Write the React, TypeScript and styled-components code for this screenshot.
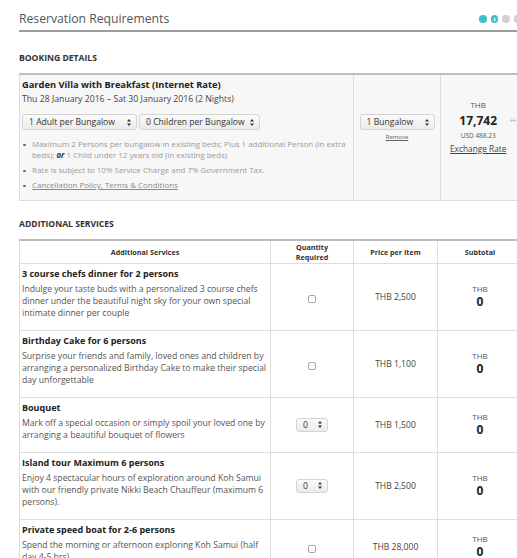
import React from 'react';
import styled, { createGlobalStyle } from 'styled-components';

const GlobalStyle = createGlobalStyle`
  html, body { margin: 0; padding: 0; overflow: hidden; background: #fff; }
  body { font-family: "Open Sans", "DejaVu Sans", sans-serif; color: #555; }
  * { box-sizing: border-box; }
`;

const Page = styled.div`
  width: 522px;
  padding-left: 19px;
`;

const Header = styled.div`
  display: flex;
  align-items: center;
  justify-content: space-between;
  height: 32px;
  padding-top: 8px;
  border-bottom: 2px solid #9c9c9c;
`;

const Title = styled.h1`
  margin: 0;
  font-size: 12.2px;
  font-weight: 400;
  line-height: 22px;
  color: #555;
`;

const Steps = styled.div`
  display: flex;
  align-items: center;
  gap: 4px;
  margin-right: 1px;
`;

const Dot = styled.span<{ $active?: boolean }>`
  display: inline-flex;
  align-items: center;
  justify-content: center;
  width: 7.5px;
  height: 7.5px;
  border-radius: 50%;
  background: ${(p) => (p.$active ? '#3cbfc8' : '#d2d2d2')};
`;

const SectionLabel = styled.h2<{ $top: number }>`
  margin: ${(p) => p.$top}px 0 10px;
  font-size: 8.6px;
  font-weight: 700;
  line-height: 10px;
  color: #333;
  text-transform: uppercase;
`;

const BookingBox = styled.div`
  display: grid;
  grid-template-columns: 334px 87px 82px;
  border-top: 2px solid #bdbdbd;
  border-left: 1px solid #dcdcdc;
  border-bottom: 1px solid #dcdcdc;
  background: #f7f7f7;
  height: 128px;
`;

const BookingMain = styled.div`
  padding: 3px 6px 0 2px;
  border-right: 1px solid #dcdcdc;
`;

const RoomName = styled.div`
  font-size: 9.3px;
  font-weight: 700;
  line-height: 13px;
  color: #222;
`;

const Dates = styled.div`
  margin-top: 2px;
  font-size: 8.7px;
  line-height: 13px;
  color: #444;
`;

const SelectRow = styled.div`
  display: flex;
  gap: 2px;
  margin-top: 8px;
`;

const Select = styled.div<{ $w: number; $h?: number }>`
  display: flex;
  align-items: center;
  justify-content: space-between;
  width: ${(p) => p.$w}px;
  height: ${(p) => p.$h ?? 16}px;
  padding: 0 5px 0 6px;
  border: 1px solid #d4d4d4;
  border-radius: 3px;
  background: linear-gradient(#fbfbfb, #ebebeb);
  font-size: 8.6px;
  color: #333;
  white-space: nowrap;
`;

const Notes = styled.ul`
  list-style: none;
  margin: 9px 0 0;
  padding: 0;
`;

const Note = styled.li`
  position: relative;
  padding-left: 10px;
  margin-bottom: 4px;
  font-size: 7.95px;
  line-height: 11px;
  color: #9a9a9a;
  &::before {
    content: '';
    position: absolute;
    left: 1px;
    top: 4.5px;
    width: 2.5px;
    height: 2.5px;
    border-radius: 50%;
    background: #666;
  }
`;

const Strong = styled.b`
  font-style: italic;
  color: #333;
`;

const NoteLink = styled.a`
  color: #8a8a8a;
  text-decoration: underline;
`;

const BookingQty = styled.div`
  display: flex;
  flex-direction: column;
  align-items: center;
  padding-top: 39px;
  border-right: 1px solid #dcdcdc;
`;

const SmallLink = styled.a`
  margin-top: 3px;
  font-size: 6px;
  line-height: 8px;
  color: #666;
  text-decoration: underline;
`;

const BookingPrice = styled.div`
  display: flex;
  align-items: flex-start;
  padding: 25px 0 0 9px;
`;

const PriceStack = styled.div`
  display: flex;
  flex-direction: column;
  align-items: center;
`;

const Currency = styled.div`
  font-size: 8px;
  line-height: 10px;
  color: #555;
`;

const Amount = styled.div<{ $size: number; $top: number }>`
  margin-top: ${(p) => p.$top}px;
  font-size: ${(p) => p.$size}px;
  font-weight: 700;
  line-height: 16px;
  color: #222;
`;

const Usd = styled.div`
  margin-top: 3px;
  font-size: 6.5px;
  line-height: 8px;
  color: #555;
`;

const Exchange = styled.a`
  margin-top: 4px;
  font-size: 8.3px;
  line-height: 10px;
  color: #444;
  text-decoration: underline;
`;

const Expand = styled.span`
  margin: 16px 0 0 3px;
  font-size: 7px;
  line-height: 10px;
  color: #aaa;
  letter-spacing: -1px;
`;

const Table = styled.table`
  width: 503px;
  table-layout: fixed;
  border-collapse: collapse;
  border-top: 2px solid #bdbdbd;
`;

const HeadCell = styled.th`
  height: 23px;
  padding: 0 2px;
  border: 1px solid #dddddd;
  border-top: none;
  font-size: 7.2px;
  font-weight: 700;
  line-height: 10px;
  color: #333;
  text-align: center;
  vertical-align: middle;
`;

const ServiceCell = styled.td`
  padding: 3px 0 11px 2px;
  border: 1px solid #dddddd;
  vertical-align: top;
`;

const Cell = styled.td`
  border: 1px solid #dddddd;
  text-align: center;
  vertical-align: middle;
`;

const ServiceName = styled.div`
  font-size: 9px;
  font-weight: 700;
  line-height: 14px;
  color: #222;
`;

const ServiceDesc = styled.div`
  margin-top: 2px;
  font-size: 8.7px;
  line-height: 12px;
  color: #555;
  letter-spacing: -0.02px;
`;

const Checkbox = styled.span`
  display: inline-block;
  width: 8px;
  height: 8px;
  margin-top: 1px;
  border: 1px solid #a8a8a8;
  border-radius: 2px;
  background: #fff;
  vertical-align: middle;
`;

const Price = styled.div`
  font-size: 8.6px;
  color: #444;
`;

const SubtotalBox = styled.div`
  display: flex;
  flex-direction: column;
  align-items: center;
`;

const QtyWrap = styled.div`
  display: flex;
  justify-content: center;
`;

const Arrows = () => (
  <svg width="4" height="7" viewBox="0 0 4 7" aria-hidden="true">
    <path d="M2 0 L4 2.6 L0 2.6 Z M2 7 L4 4.4 L0 4.4 Z" fill="#333" />
  </svg>
);

const Chevron = () => (
  <svg width="5" height="5" viewBox="0 0 5 5" aria-hidden="true">
    <path d="M1.8 1 L3.2 2.5 L1.8 4" stroke="#fff" strokeWidth="1.1" fill="none" />
  </svg>
);

type Service = {
  name: string;
  desc: string;
  qty: 'check' | 'select';
  price: string;
};

const services: Service[] = [
  {
    name: '3 course chefs dinner for 2 persons',
    desc: 'Indulge your taste buds with a personalized 3 course chefs dinner under the beautiful night sky for your own special intimate dinner per couple',
    qty: 'check',
    price: 'THB 2,500',
  },
  {
    name: 'Birthday Cake for 6 persons',
    desc: 'Surprise your friends and family, loved ones and children by arranging a personalized Birthday Cake to make their special day unforgettable',
    qty: 'check',
    price: 'THB 1,100',
  },
  {
    name: 'Bouquet',
    desc: 'Mark off a special occasion or simply spoil your loved one by arranging a beautiful bouquet of flowers',
    qty: 'select',
    price: 'THB 1,500',
  },
  {
    name: 'Island tour Maximum 6 persons',
    desc: 'Enjoy 4 spectacular hours of exploration around Koh Samui with our friendly private Nikki Beach Chauffeur (maximum 6 persons).',
    qty: 'select',
    price: 'THB 2,500',
  },
  {
    name: 'Private speed boat for 2-6 persons',
    desc: 'Spend the morning or afternoon exploring Koh Samui (half day 4-5 hrs)',
    qty: 'check',
    price: 'THB 28,000',
  },
];

export default function App() {
  return (
    <>
      <GlobalStyle />
      <Page>
        <Header>
          <Title>Reservation Requirements</Title>
          <Steps>
            <Dot $active />
            <Dot $active>
              <Chevron />
            </Dot>
            <Dot />
            <Dot />
          </Steps>
        </Header>

        <SectionLabel $top={21}>Booking Details</SectionLabel>
        <BookingBox>
          <BookingMain>
            <RoomName>Garden Villa with Breakfast (Internet Rate)</RoomName>
            <Dates>Thu 28 January 2016 – Sat 30 January 2016 (2 Nights)</Dates>
            <SelectRow>
              <Select $w={115}>
                1 Adult per Bungalow <Arrows />
              </Select>
              <Select $w={121}>
                0 Children per Bungalow <Arrows />
              </Select>
            </SelectRow>
            <Notes>
              <Note>
                Maximum 2 Persons per bungalow in existing beds; Plus 1 additional Person (in extra beds);{' '}
                <Strong>or</Strong> 1 Child under 12 years old (in existing beds)
              </Note>
              <Note>Rate is subject to 10% Service Charge and 7% Government Tax.</Note>
              <Note>
                <NoteLink>Cancellation Policy, Terms &amp; Conditions</NoteLink>
              </Note>
            </Notes>
          </BookingMain>
          <BookingQty>
            <Select $w={75}>
              1 Bungalow <Arrows />
            </Select>
            <SmallLink>Remove</SmallLink>
          </BookingQty>
          <BookingPrice>
            <PriceStack>
              <Currency>THB</Currency>
              <Amount $size={12} $top={3}>17,742</Amount>
              <Usd>USD 488.23</Usd>
              <Exchange>Exchange Rate</Exchange>
            </PriceStack>
            <Expand>++</Expand>
          </BookingPrice>
        </BookingBox>

        <SectionLabel $top={18}>Additional Services</SectionLabel>
        <Table>
          <colgroup>
            <col style={{ width: 251 }} />
            <col style={{ width: 83 }} />
            <col style={{ width: 84 }} />
            <col style={{ width: 85 }} />
          </colgroup>
          <thead>
            <tr>
              <HeadCell>Additional Services</HeadCell>
              <HeadCell>
                Quantity
                <br />
                Required
              </HeadCell>
              <HeadCell>Price per Item</HeadCell>
              <HeadCell>Subtotal</HeadCell>
            </tr>
          </thead>
          <tbody>
            {services.map((s) => (
              <tr key={s.name}>
                <ServiceCell>
                  <ServiceName>{s.name}</ServiceName>
                  <ServiceDesc>{s.desc}</ServiceDesc>
                </ServiceCell>
                <Cell>
                  {s.qty === 'check' ? (
                    <Checkbox />
                  ) : (
                    <QtyWrap>
                      <Select $w={32} $h={14}>
                        0 <Arrows />
                      </Select>
                    </QtyWrap>
                  )}
                </Cell>
                <Cell>
                  <Price>{s.price}</Price>
                </Cell>
                <Cell>
                  <SubtotalBox>
                    <Currency>THB</Currency>
                    <Amount $size={12} $top={0}>0</Amount>
                  </SubtotalBox>
                </Cell>
              </tr>
            ))}
          </tbody>
        </Table>
      </Page>
    </>
  );
}
